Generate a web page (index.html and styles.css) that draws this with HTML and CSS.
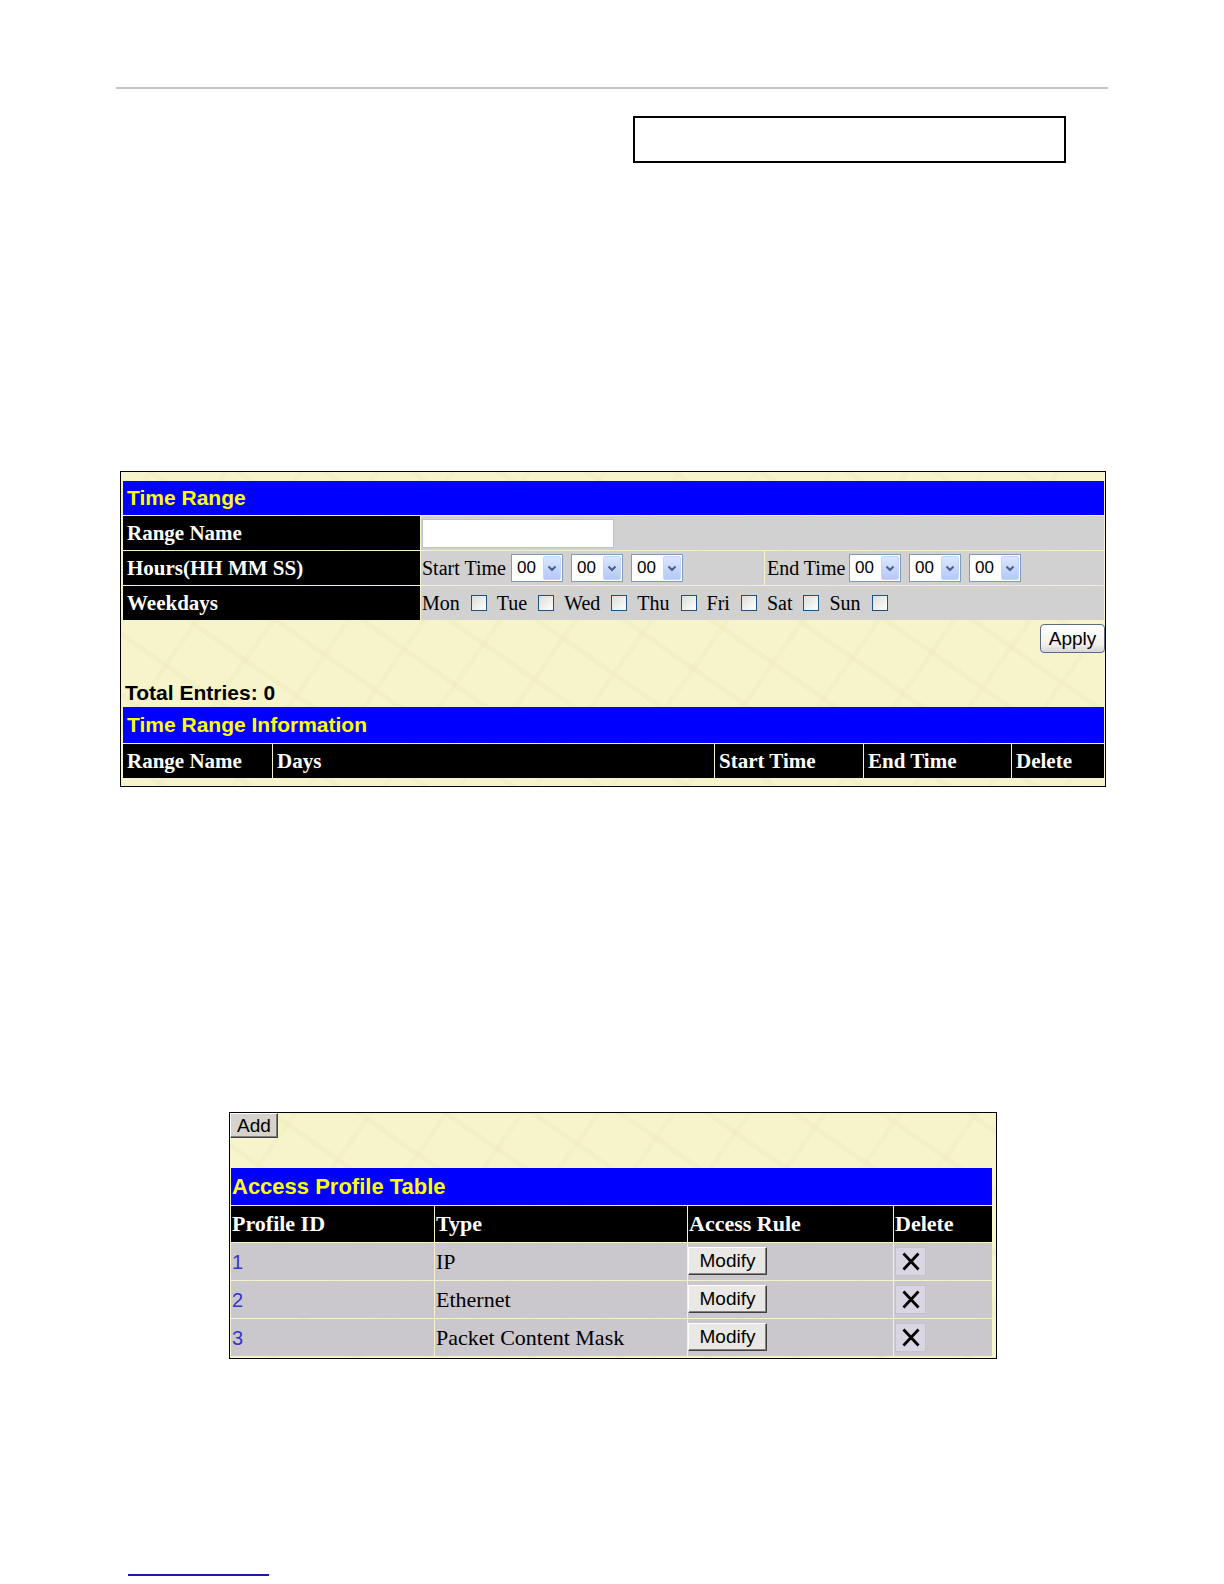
FILE: index.html
```html
<!DOCTYPE html>
<html>
<head>
<meta charset="utf-8">
<link rel="stylesheet" href="styles.css">
</head>
<body>
<div class="page">
  <div class="rule"></div>
  <div class="box"></div>

  <div class="panel p1">
    <table class="grid form">
      <colgroup><col class="c-label"><col class="c-start"><col></colgroup>
      <tr class="r-title"><td class="title" colspan="3">Time Range</td></tr>
      <tr class="r-row">
        <th>Range Name</th>
        <td class="val" colspan="2"><span class="textbox"></span></td>
      </tr>
      <tr class="r-row">
        <th>Hours(HH MM SS)</th>
        <td class="val"><div class="line"><span class="lbl lbl-s">Start Time</span>
          <span class="sel">00<span class="arr"><svg width="10" height="7" viewBox="0 0 10 7"><path d="M1.5 1.5 L5 5 L8.5 1.5" fill="none" stroke="#4a5f8a" stroke-width="2"/></svg></span></span>
          <span class="sel">00<span class="arr"><svg width="10" height="7" viewBox="0 0 10 7"><path d="M1.5 1.5 L5 5 L8.5 1.5" fill="none" stroke="#4a5f8a" stroke-width="2"/></svg></span></span>
          <span class="sel">00<span class="arr"><svg width="10" height="7" viewBox="0 0 10 7"><path d="M1.5 1.5 L5 5 L8.5 1.5" fill="none" stroke="#4a5f8a" stroke-width="2"/></svg></span></span>
        </div></td>
        <td class="val val-end"><div class="line"><span class="lbl lbl-e">End Time</span>
          <span class="sel">00<span class="arr"><svg width="10" height="7" viewBox="0 0 10 7"><path d="M1.5 1.5 L5 5 L8.5 1.5" fill="none" stroke="#4a5f8a" stroke-width="2"/></svg></span></span>
          <span class="sel">00<span class="arr"><svg width="10" height="7" viewBox="0 0 10 7"><path d="M1.5 1.5 L5 5 L8.5 1.5" fill="none" stroke="#4a5f8a" stroke-width="2"/></svg></span></span>
          <span class="sel">00<span class="arr"><svg width="10" height="7" viewBox="0 0 10 7"><path d="M1.5 1.5 L5 5 L8.5 1.5" fill="none" stroke="#4a5f8a" stroke-width="2"/></svg></span></span>
        </div></td>
      </tr>
      <tr class="r-row">
        <th>Weekdays</th>
        <td class="val" colspan="2"><div class="line days">
          <span class="day">Mon</span><span class="cb"></span>
          <span class="day">Tue</span><span class="cb"></span>
          <span class="day">Wed</span><span class="cb"></span>
          <span class="day">Thu</span><span class="cb"></span>
          <span class="day">Fri</span><span class="cb"></span>
          <span class="day">Sat</span><span class="cb"></span>
          <span class="day">Sun</span><span class="cb"></span>
        </div></td>
      </tr>
    </table>
    <div class="apply-row"><button class="xp">Apply</button></div>
    <div class="total">Total Entries: 0</div>
    <table class="grid info">
      <colgroup><col class="i1"><col class="i2"><col class="i3"><col class="i4"><col></colgroup>
      <tr class="r-title"><td class="title title-info" colspan="5">Time Range Information</td></tr>
      <tr class="r-row"><th>Range Name</th><th>Days</th><th>Start Time</th><th>End Time</th><th>Delete</th></tr>
    </table>
  </div>

  <div class="panel p2">
    <div class="add-row"><button class="classic add">Add</button></div>
    <table class="grid prof">
      <colgroup><col class="q1"><col class="q2"><col class="q3"><col></colgroup>
      <tr><td class="title t2" colspan="4">Access Profile Table</td></tr>
      <tr><th>Profile ID</th><th>Type</th><th>Access Rule</th><th>Delete</th></tr>
      <tr>
        <td class="dv"><span class="id">1</span></td><td class="dv">IP</td>
        <td class="dv dv-btn"><button class="classic mod">Modify</button></td>
        <td class="dv dv-btn"><span class="del"><svg width="22" height="21" viewBox="0 0 22 21"><path d="M3.5 2.5 L18.5 18.5 M18.5 2.5 L3.5 18.5" stroke="#000" stroke-width="2.8" stroke-linecap="butt"/></svg></span></td>
      </tr>
      <tr>
        <td class="dv"><span class="id">2</span></td><td class="dv">Ethernet</td>
        <td class="dv dv-btn"><button class="classic mod">Modify</button></td>
        <td class="dv dv-btn"><span class="del"><svg width="22" height="21" viewBox="0 0 22 21"><path d="M3.5 2.5 L18.5 18.5 M18.5 2.5 L3.5 18.5" stroke="#000" stroke-width="2.8" stroke-linecap="butt"/></svg></span></td>
      </tr>
      <tr>
        <td class="dv"><span class="id">3</span></td><td class="dv">Packet Content Mask</td>
        <td class="dv dv-btn"><button class="classic mod">Modify</button></td>
        <td class="dv dv-btn"><span class="del"><svg width="22" height="21" viewBox="0 0 22 21"><path d="M3.5 2.5 L18.5 18.5 M18.5 2.5 L3.5 18.5" stroke="#000" stroke-width="2.8" stroke-linecap="butt"/></svg></span></td>
      </tr>
    </table>
  </div>

  <div class="foot"></div>
</div>
</body>
</html>
```
FILE: styles.css
```css
html, body {
  margin: 0;
  padding: 0;
  background: #ffffff;
}
.page {
  width: 1224px;
  height: 1584px;
  padding-top: 87px;
  box-sizing: border-box;
  font-family: "Liberation Serif", serif;
  overflow: hidden;
}
.rule {
  margin-left: 116px;
  width: 992px;
  height: 2px;
  background: #c4c4c4;
}
.box {
  margin: 27px 0 0 633px;
  width: 433px;
  height: 47px;
  border: 2px solid #000;
  box-sizing: border-box;
}
.panel {
  border: 1px solid #000;
  box-sizing: border-box;
  background-color: #f7f4cc;
  background-image:
    repeating-linear-gradient(35deg, rgba(236,231,184,0) 0 22px, rgba(238,233,186,0.4) 22px 27px, rgba(236,231,184,0) 27px 50px),
    repeating-linear-gradient(-55deg, rgba(236,231,184,0) 0 30px, rgba(240,236,192,0.45) 30px 35px, rgba(236,231,184,0) 35px 62px);
}
.p1 {
  margin: 308px 0 0 120px;
  width: 986px;
  padding: 8px 0 7px 1px;
}
.grid {
  border-collapse: separate;
  border-spacing: 1px;
  width: 100%;
  table-layout: fixed;
}
.c-label { width: 297px; }
.c-start { width: 343px; }
.title {
  background: #0000ff;
  color: #ffff00;
  font: bold 21px "Liberation Sans", Arial, sans-serif;
  padding: 0 4px;
  height: 34px;
  vertical-align: middle;
}
.title-info { height: 36px; }
.r-row th, .r-row td { height: 34px; }
.grid th {
  background: #000;
  color: #fff;
  font: bold 21px "Liberation Serif", serif;
  text-align: left;
  padding: 0 4px;
  vertical-align: middle;
  white-space: nowrap;
  overflow: hidden;
}
.val {
  background: #d1d1d1;
  font: 20px "Liberation Serif", serif;
  color: #000;
  padding: 0 1px;
  vertical-align: middle;
}
.val-end { padding-left: 2px; }
.textbox {
  display: block;
  width: 192px;
  height: 29px;
  background: #fff;
  border: 1px solid #b8c4d6;
  box-sizing: border-box;
}
.line {
  display: flex;
  align-items: center;
  gap: 8px;
  white-space: nowrap;
}
.lbl-s { width: 81px; }
.lbl-e { width: 74px; }
.sel {
  display: inline-flex;
  align-items: center;
  justify-content: space-between;
  width: 52px;
  height: 28px;
  box-sizing: border-box;
  border: 1px solid #7f9db9;
  background: #fff;
  padding-left: 5px;
  font: 17px "Liberation Sans", Arial, sans-serif;
  color: #000;
}
.arr {
  width: 18px;
  height: 24px;
  margin-right: 1px;
  box-sizing: border-box;
  border: 1px solid #c3d3fd;
  border-radius: 2px;
  background: linear-gradient(#dbe6fe, #b4c9f8);
  display: flex;
  align-items: center;
  justify-content: center;
}
.days { gap: 0; }
.day { margin-right: 11px; }
.cb {
  display: inline-block;
  width: 16px;
  height: 16px;
  box-sizing: border-box;
  border: 1px solid #1c5180;
  background: linear-gradient(135deg, #dcdcd7, #fff);
  margin-right: 10px;
}
.apply-row {
  display: flex;
  justify-content: flex-end;
  padding-top: 3px;
  height: 35px;
  box-sizing: border-box;
}
.xp {
  width: 65px;
  height: 29px;
  margin: 0;
  border: 1px solid #5d6b7e;
  border-radius: 4px;
  background: linear-gradient(#ffffff, #f2f1ec 70%, #d9d6cc);
  font: 19px "Liberation Sans", Arial, sans-serif;
  color: #000;
  padding: 0;
}
.total {
  height: 50px;
  box-sizing: border-box;
  padding: 25px 0 0 3px;
  font: bold 21px "Liberation Sans", Arial, sans-serif;
  color: #000;
  line-height: 24px;
}
.i1 { width: 149px; }
.i2 { width: 441px; }
.i3 { width: 148px; }
.i4 { width: 147px; }

.p2 {
  margin: 325px 0 0 229px;
  width: 768px;
  padding: 0 3px 1px 0;
}
.add-row {
  height: 54px;
}
.classic {
  font: 19px "Liberation Sans", Arial, sans-serif;
  color: #000;
  padding: 0;
  margin: 0;
  border: 1px solid;
  border-color: #ffffff #404040 #404040 #ffffff;
  box-shadow: inset -1px -1px 0 #808080;
}
.add {
  width: 48px;
  height: 25px;
  background: #d6d3cc;
  display: block;
  font-size: 19px;
  line-height: 20px;
}
.q1 { width: 203px; }
.q2 { width: 252px; }
.q3 { width: 205px; }
.t2 {
  height: 37px;
  font-size: 22px;
  padding-left: 1px;
}
.prof th {
  font-size: 22px;
  height: 36px;
  padding: 0 1px;
}
.dv {
  background: #cbc8cd;
  height: 37px;
  padding: 0 1px;
  font: 22px "Liberation Serif", serif;
  vertical-align: middle;
}
.dv-btn { vertical-align: top; padding-top: 4px; box-sizing: border-box; }
.dv-btn:nth-child(3) { padding-left: 0; }
.dv-btn:nth-child(4) { padding-left: 1px; }
.id {
  color: #3535c8;
  font: 20px "Liberation Sans", Arial, sans-serif;
}
.mod {
  width: 79px;
  height: 28px;
  background: #e9e8e4;
  display: block;
}
.del {
  display: flex;
  align-items: center;
  justify-content: center;
  width: 31px;
  height: 29px;
  background: #d9d5e2;
  border: 1px solid #c6c1cf;
  box-sizing: border-box;
}
.foot {
  margin: 215px 0 0 128px;
  width: 141px;
  height: 2px;
  background: #1a1aa8;
}
```
